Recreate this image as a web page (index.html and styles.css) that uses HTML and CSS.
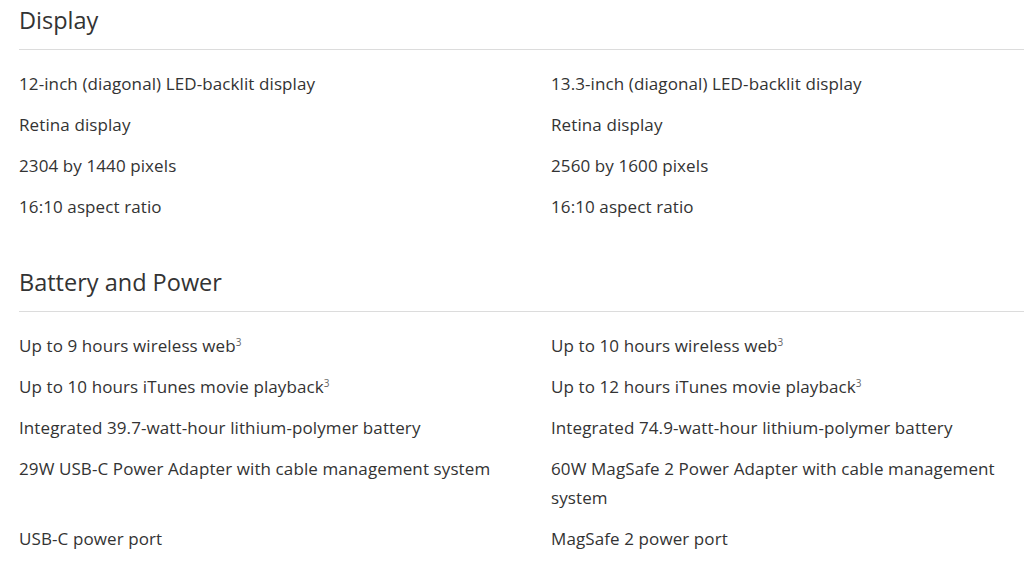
FILE: index.html
```html
<!DOCTYPE html>
<html>
<head>
<meta charset="utf-8">
<link rel="stylesheet" href="styles.css">
</head>
<body>
<div class="page">
  <section class="spec">
    <h2 class="spec-title">Display</h2>
    <div class="spec-grid">
      <div class="spec-item">12-inch (diagonal) LED-backlit display</div>
      <div class="spec-item">13.3-inch (diagonal) LED-backlit display</div>
      <div class="spec-item">Retina display</div>
      <div class="spec-item">Retina display</div>
      <div class="spec-item">2304 by 1440 pixels</div>
      <div class="spec-item">2560 by 1600 pixels</div>
      <div class="spec-item">16:10 aspect ratio</div>
      <div class="spec-item">16:10 aspect ratio</div>
    </div>
  </section>
  <section class="spec">
    <h2 class="spec-title">Battery and Power</h2>
    <div class="spec-grid">
      <div class="spec-item">Up to 9 hours wireless web<sup>3</sup></div>
      <div class="spec-item">Up to 10 hours wireless web<sup>3</sup></div>
      <div class="spec-item">Up to 10 hours iTunes movie playback<sup>3</sup></div>
      <div class="spec-item">Up to 12 hours iTunes movie playback<sup>3</sup></div>
      <div class="spec-item">Integrated 39.7-watt-hour lithium-polymer battery</div>
      <div class="spec-item">Integrated 74.9-watt-hour lithium-polymer battery</div>
      <div class="spec-item">29W USB-C Power Adapter with cable management system</div>
      <div class="spec-item">60W MagSafe 2 Power Adapter with cable management system</div>
      <div class="spec-item">USB-C power port</div>
      <div class="spec-item">MagSafe 2 power port</div>
    </div>
  </section>
</div>
</body>
</html>
```
FILE: styles.css
```css
html, body {
  margin: 0;
  padding: 0;
  background: #fff;
  overflow: hidden;
}
body {
  font-family: "Open Sans", "Liberation Sans", sans-serif;
  color: #333;
  width: 1024px;
  height: 578px;
}
.page {
  padding-left: 19px;
}
.spec {
  margin-bottom: 41px;
}
.spec-title {
  margin: 0;
  font-size: 23.5px;
  font-weight: 400;
  line-height: 38px;
  padding-top: 1px;
  padding-bottom: 10px;
  border-bottom: 1px solid #dcdcdc;
  color: #333;
}
.spec-grid {
  display: grid;
  grid-template-columns: 532px 1fr;
  row-gap: 12px;
  padding-top: 19px;
  font-size: 17px;
  letter-spacing: 0.1px;
  line-height: 29px;
}
.spec-item {
  padding-right: 20px;
}
sup {
  font-size: 10px;
  line-height: 0;
  vertical-align: 6px;
  color: #666;
  letter-spacing: 0;
}
```
